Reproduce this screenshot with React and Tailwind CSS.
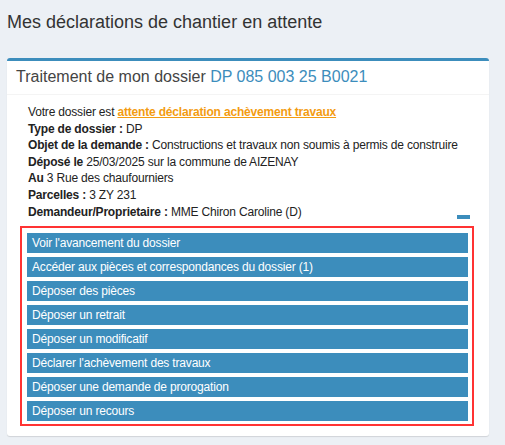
const ACTIONS = [
  "Voir l'avancement du dossier",
  'Accéder aux pièces et correspondances du dossier (1)',
  'Déposer des pièces',
  'Déposer un retrait',
  'Déposer un modificatif',
  "Déclarer l'achèvement des travaux",
  'Déposer une demande de prorogation',
  'Déposer un recours',
];

export default function App() {
  return (
    <div className="min-h-[445px] bg-[#ecf0f5] font-['Liberation_Sans',Arial,sans-serif] text-[#333] px-[7px] pb-[8px]">
      <h1 className="pt-[12px] text-[18px] leading-[20px] font-normal">Mes déclarations de chantier en attente</h1>

      <div className="mt-[26px] w-[482px] bg-white border-t-[3px] border-[#3c8dbc] rounded-[3px] shadow-[0_1px_1px_rgba(0,0,0,0.12)]">
        {/* Header */}
        <div className="px-[9px] pt-[7px] pb-[9px] border-b border-[#f4f4f4] text-[16px] leading-[17px] text-[#444]">
          Traitement de mon dossier <span className="text-[#3c8dbc]">DP 085 003 25 B0021</span>
        </div>

        {/* Body */}
        <div className="pt-[9px] pb-[10px] text-[12px] leading-[16.6px] tracking-[-0.18px] text-[#222]">
          <div className="pl-[21px] pr-[19px]">
            <p>
              Votre dossier est{' '}
              <a href="#" className="font-bold text-[#f39c12] underline">attente déclaration achèvement travaux</a>
            </p>
            <p><b>Type de dossier :</b> DP</p>
            <p className="whitespace-nowrap"><b>Objet de la demande :</b> Constructions et travaux non soumis à permis de construire</p>
            <p><b>Déposé le</b> 25/03/2025 sur la commune de AIZENAY</p>
            <p><b>Au</b> 3 Rue des chaufourniers</p>
            <p><b>Parcelles :</b> 3 ZY 231</p>
            <div className="flex items-end justify-between">
              <p><b>Demandeur/Proprietaire :</b> MME Chiron Caroline (D)</p>
              <span className="mb-[1px] block w-[13px] h-[4px] bg-[#3c8dbc]" />
            </div>
          </div>

          <div className="mt-[6px] ml-[13px] w-[454px] border-2 border-[#ff3333] pl-[5px] pr-[4px] pt-[5px] pb-[3px] flex flex-col gap-[4px]">
            {ACTIONS.map((label) => (
              <button
                key={label}
                className="h-[20px] bg-[#3c8dbc] text-white text-left text-[12px] leading-[20px] tracking-[-0.18px] pl-[5px]"
              >
                {label}
              </button>
            ))}
          </div>
        </div>
      </div>
    </div>
  );
}
